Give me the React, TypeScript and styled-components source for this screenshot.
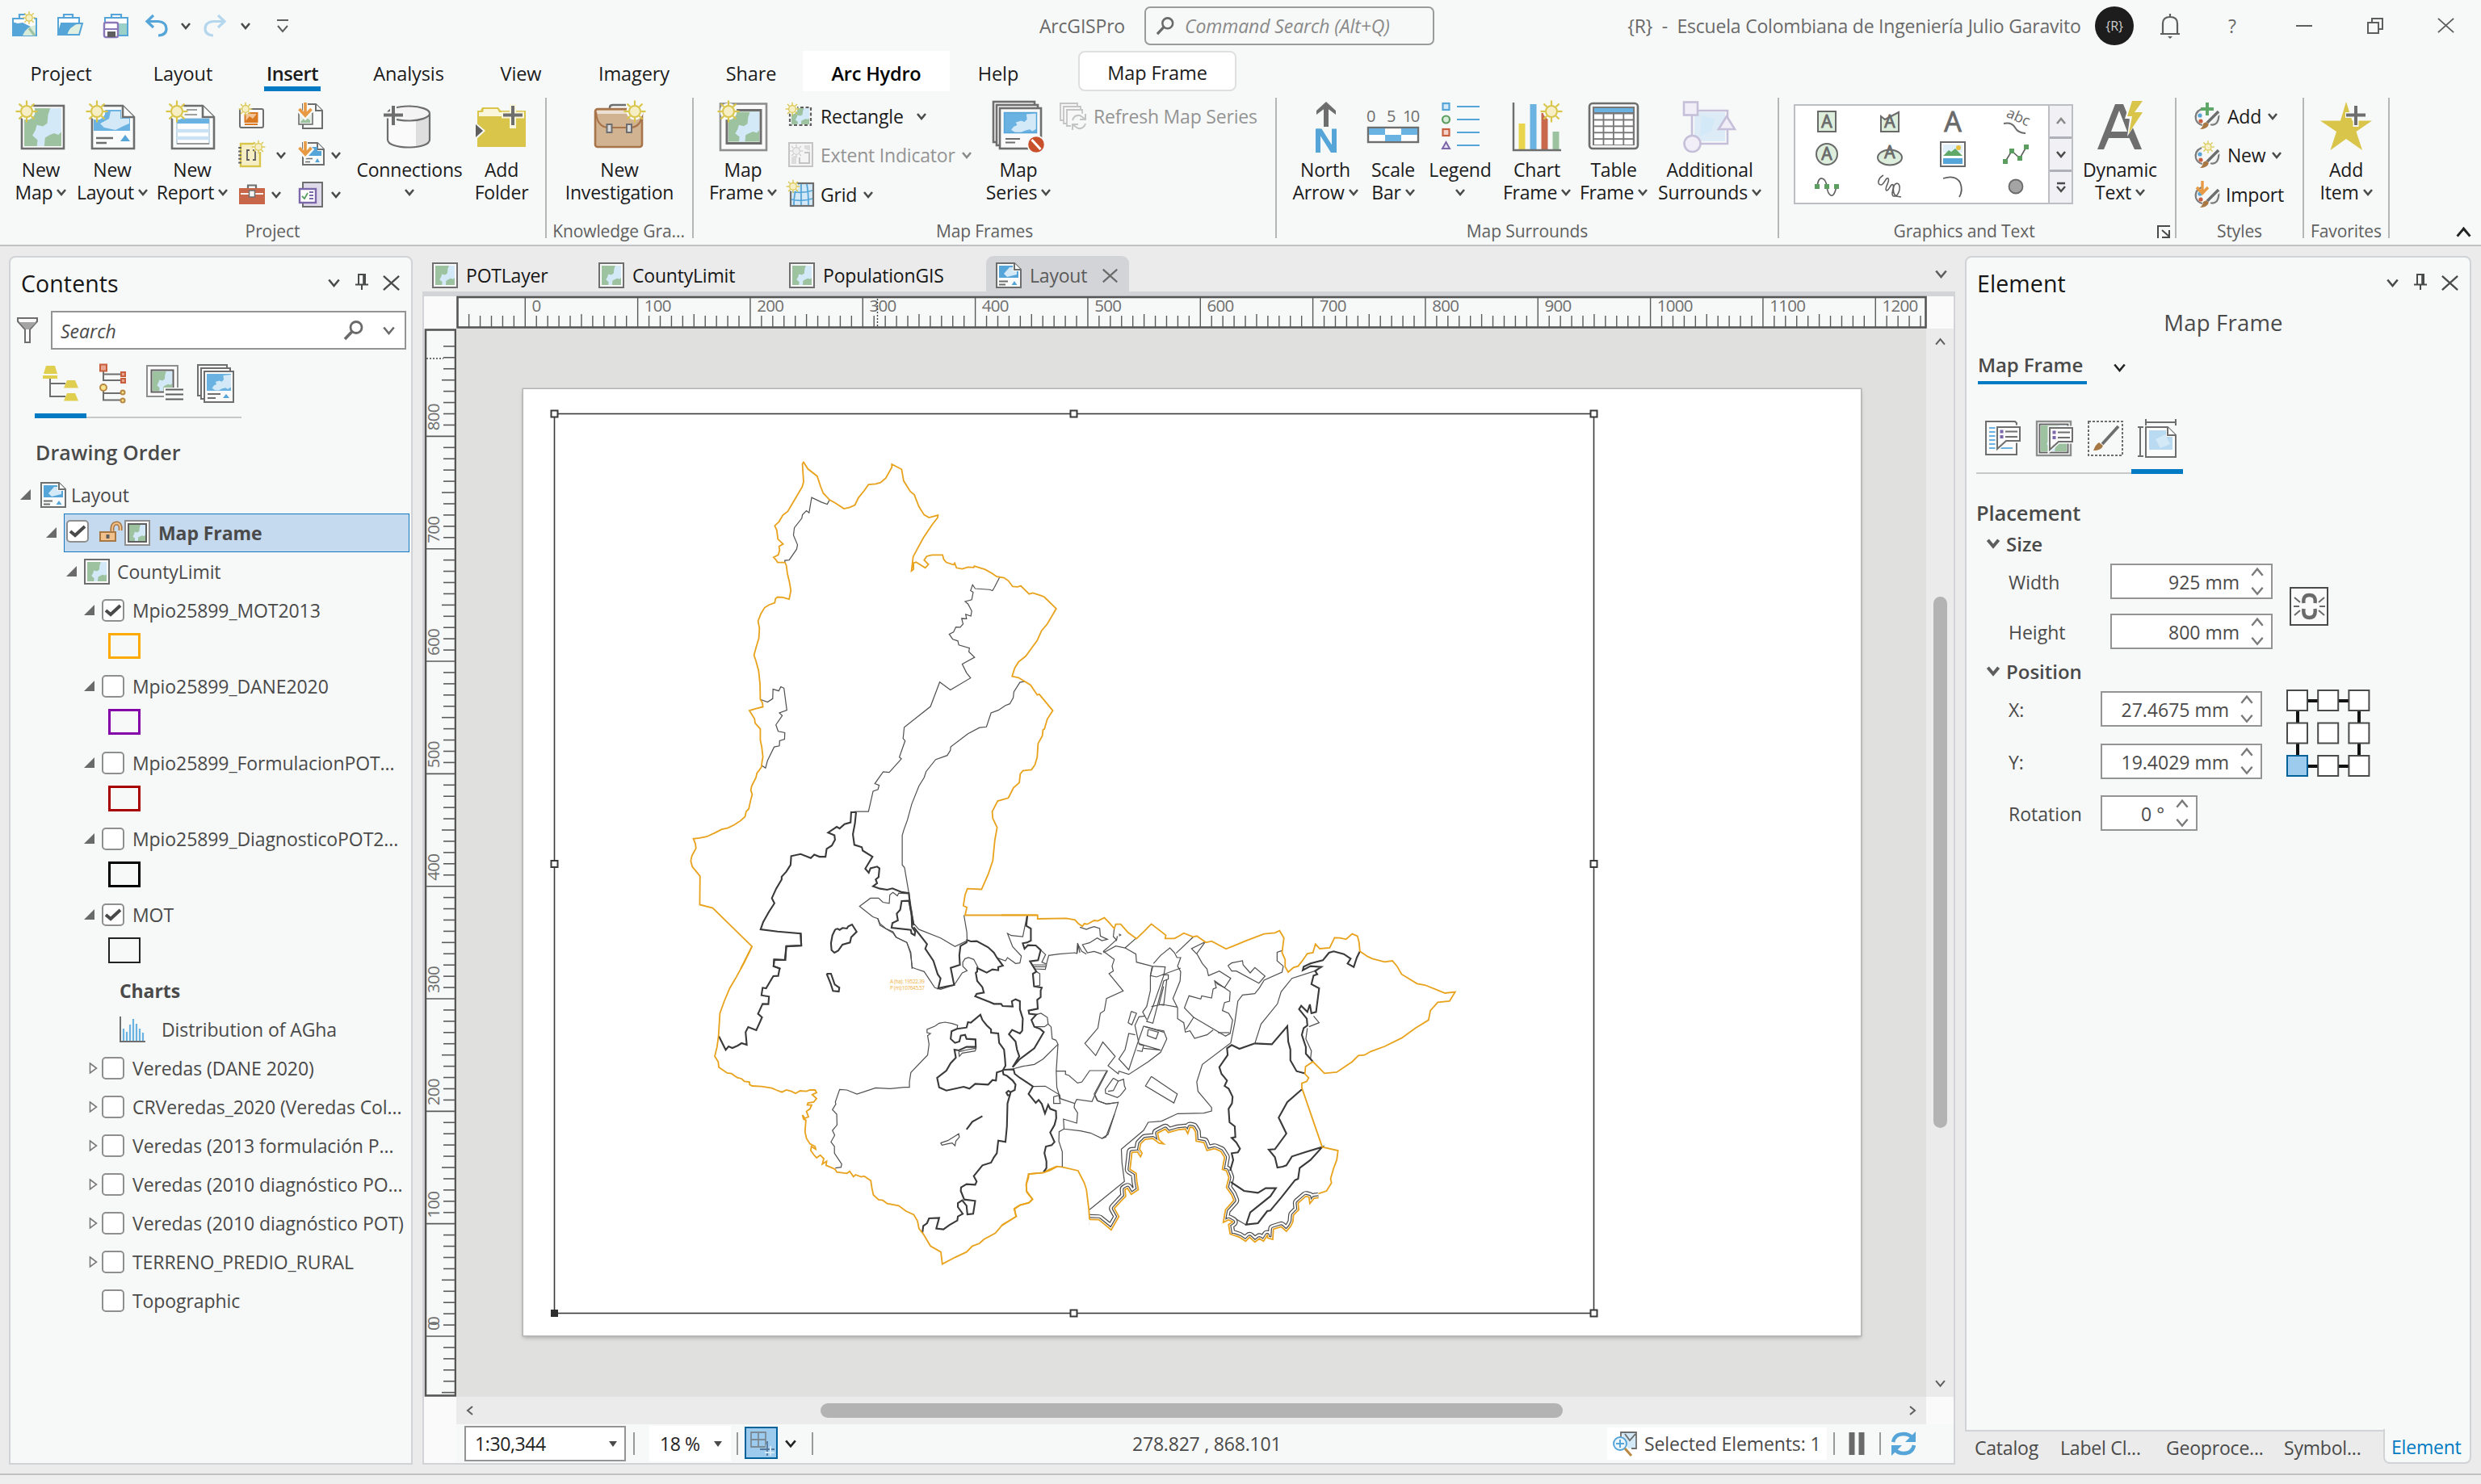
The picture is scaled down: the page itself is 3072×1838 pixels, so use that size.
import React from "react";
import styled, { createGlobalStyle, css } from "styled-components";

const font = `"Open Sans", "Noto Sans", sans-serif`;
const c = {
  bar: "#f7f9f8",
  shell: "#ebebeb",
  line: "#d2d3d7",
  ink: "#1b1b1b",
  text: "#4a4a4a",
  dim: "#6a6a6a",
  blue: "#007ac2",
  sky: "#56a5d8",
};

const Global = createGlobalStyle`
  * { box-sizing: border-box; }
  body { margin: 0; background: ${c.shell}; font-family: ${font}; font-size: 23px; color: ${c.text}; }
  svg { display: block; flex: none; overflow: visible; }
`;

/* ---------- glyph helpers ---------- */
type Dir = "down" | "up" | "left" | "right";
const chev: Record<Dir, string> = {
  down: "M1 2 L6 8 L11 2",
  up: "M1 8 L6 2 L11 8",
  left: "M9 0 L3 5 L9 10",
  right: "M3 0 L9 5 L3 10",
};
const Chevron = ({ dir = "down", w = 12, sw = 2.6, color = "#4a4a4a" }: { dir?: Dir; w?: number; sw?: number; color?: string }) => (
  <svg width={w} height={(w * 10) / 12} viewBox="0 0 12 10">
    <path d={chev[dir]} fill="none" stroke={color} strokeWidth={(sw * 12) / w} />
  </svg>
);

const Sun = ({ x, y, s = 1, mono }: { x: number; y: number; s?: number; mono?: boolean }) => {
  const rays = [0, 45, 90, 135, 180, 225, 270, 315];
  return (
    <g transform={`translate(${x} ${y}) scale(${s})`}>
      <circle r="10.5" fill={c.bar} />
      {rays.map((r) => (
        <path key={r} d="M0 -8 V-13.5" transform={`rotate(${r})`} stroke={mono ? "#cfcfcf" : "#d9c54a"} strokeWidth="2.2" />
      ))}
      <circle r="7" fill={mono ? "#eee" : "#f6efc6"} stroke={mono ? "#cfcfcf" : "#d9c54a"} strokeWidth="2" />
    </g>
  );
};

const MapArt = ({ x, y, w, h, blue }: { x: number; y: number; w: number; h: number; blue?: boolean }) => (
  <svg x={x} y={y} width={w} height={h} viewBox="0 0 100 100" preserveAspectRatio="none">
    <rect width="100" height="100" fill={blue ? "#69b2e2" : "#9dc29f"} />
    {blue ? (
      <path d="M68 10 L100 5 V78 L86 90 L78 82 L62 88 L50 98 L34 96 L22 84 L30 68 L40 62 L36 48 L52 40 L62 46 L70 34 Z" fill="#d3e9f8" />
    ) : (
      <path d="M70 0 H100 V62 L92 70 L80 66 L66 72 L56 78 L54 100 H34 L36 84 L22 72 L30 58 L34 44 L50 48 L62 40 L64 18 Z" fill="#d3e9f8" />
    )}
  </svg>
);

const PageShape = ({ x, y, w, h, f = 14, sw = 3 }: { x: number; y: number; w: number; h: number; f?: number; sw?: number }) => (
  <g fill={"#fafbfb"} stroke="#6e6e6e" strokeWidth={sw}>
    <path d={`M${x} ${y} H${x + w - f} L${x + w} ${y + f} V${y + h} H${x} Z`} />
    <path d={`M${x + w - f} ${y} V${y + f} H${x + w}`} />
  </g>
);

const Icon = ({ w = 64, h = 64, children }: { w?: number; h?: number; children: React.ReactNode }) => (
  <svg width={w} height={h} viewBox={`0 0 ${w} ${h}`} fill="none">
    {children}
  </svg>
);

/* ---------- large ribbon icons ---------- */
const NewMapIcon = () => (
  <Icon>
    <rect x="8" y="6" width="52" height="53" fill="#fff" stroke="#6e6e6e" strokeWidth="2.6" />
    <MapArt x={11} y={9} w={46} h={47} />
    <Sun x={14} y={13} />
  </Icon>
);
const NewLayoutIcon = () => (
  <Icon>
    <PageShape x={7} y={6} w={52} h={53} sw={2.6} />
    <path d="M9 11 H43 V21 H54 V37 H9 Z" fill="#69b2e2" />
    <path d="M30 13 H42 V22 H53 V28 L46 31 L36 36 L22 33 L17 28 L28 22 Z" fill="#d3e9f8" />
    <path d="M12 46 H33 M12 52 H25" stroke="#6e6e6e" strokeWidth="2.4" />
    <path d="M48 42 L54 50 H42 Z" fill={c.sky} />
    <Sun x={13} y={13} />
  </Icon>
);
const NewReportIcon = () => (
  <Icon>
    <PageShape x={7} y={6} w={52} h={53} sw={2.6} />
    <path d="M25 11 H38 M22 17 H38" stroke="#a0a0a0" strokeWidth="2.2" />
    <rect x="13" y="22" width="40" height="31" fill="#fff" stroke="#8fb4cc" strokeWidth="1" />
    <path d="M13 25 H53" stroke="#69b2e2" strokeWidth="6" />
    <path d="M13 37 H53 M13 46 H53" stroke="#c9e3f4" strokeWidth="4.5" />
    <path d="M13 53 H53" stroke="#9a9a9a" strokeWidth="2" />
    <Sun x={13} y={13} />
  </Icon>
);
const ConnectionsIcon = () => (
  <Icon>
    <path d="M5 16 V48 C5 54 17 57.500 31 57.500 S57 54 57 48 V16" fill="#fafafa" />
    <path d="M40 22 C49 22 57 18 57 16 V48 C57 52 49 56 40 57 Z" fill="#dedede" />
    <path d="M5 16 V48 C5 54 17 57.500 31 57.500 S57 54 57 48 V16" stroke="#6e6e6e" strokeWidth="2.2" />
    <ellipse cx="31" cy="15.500" rx="26" ry="9" fill="#f4f4f4" stroke="#6e6e6e" strokeWidth="2.2" />
    <path d="M12 4 V32 M-1 17.500 H26" stroke={c.bar} strokeWidth="8" />
    <path d="M12 6 V30 M0 17.500 H24" stroke="#6e6e6e" strokeWidth="4" />
  </Icon>
);
const FolderIcon = () => (
  <Icon>
    <path d="M2 57 V12 L6 12 L8 8 H28 L31 12 H62 V57 Z" fill="#d9c54a" />
    <path d="M4 19 V14 H9 L10 10 H27 L29 14 H60 V19 Z" fill="#faf6dc" />
    <path d="M-2 25 L12 37 L-2 50 Z" fill={c.bar} />
    <path d="M0 29 L9 37 L0 45 Z" fill="#5f5f5f" />
    <path d="M46 4 V34 M32 17.500 H60" stroke="#faf6dc" strokeWidth="8" />
    <path d="M46 6 V30 M34 17.500 H58" stroke="#6e6e6e" strokeWidth="4" />
  </Icon>
);
const BriefcaseIcon = () => (
  <Icon>
    <path d="M20 11 V8 Q20 5 24 5 H40" stroke="#6e6e6e" strokeWidth="2.400" />
    <rect x="2" y="10" width="58" height="47" rx="3" fill="#d2b391" stroke="#a8744a" strokeWidth="2.6" />
    <path d="M4 12 H58 V16 H4 Z" fill="#ece0d2" />
    <path d="M3 14 Q4 32 18 33 H46 Q58 32 60 18" stroke="#a8744a" strokeWidth="2.2" />
    <rect x="16.500" y="29" width="6" height="10" fill="#d8d8d8" stroke="#6e6e6e" strokeWidth="2" />
    <rect x="41" y="29" width="6" height="10" fill="#d8d8d8" stroke="#6e6e6e" strokeWidth="2" />
    <Sun x={51} y={13} />
  </Icon>
);
const MapFrameIcon = () => (
  <Icon>
    <rect x="4" y="3.500" width="57" height="57.500" fill="#fafafa" stroke="#8e8e8e" strokeWidth="2.6" />
    <rect x="12" y="11.500" width="42" height="41" fill="#fff" stroke="#6e6e6e" strokeWidth="3" />
    <MapArt x={14} y={13.5} w={38} h={37} />
    <Sun x={14} y={13} />
  </Icon>
);
const MapSeriesIcon = () => (
  <Icon w={66}>
    <g fill="#fafafa" stroke="#6e6e6e" strokeWidth="2.600">
      <rect x="2" y="1" width="51" height="50" />
      <rect x="6" y="5" width="51" height="50" />
      <rect x="10" y="9" width="51" height="50" />
    </g>
    <MapArt x={15} y={14} w={41} h={26} blue />
    <rect x="15.500" y="14.500" width="40" height="25" stroke={c.sky} strokeWidth="1.500" />
    <path d="M17 47 H35 M17 51.500 H29" stroke="#6e6e6e" strokeWidth="2.200" />
    <circle cx="55" cy="54" r="11.500" fill={c.bar} />
    <circle cx="55" cy="54" r="9.800" fill="#c8502b" />
    <path d="M49.500 48 L60.500 60" stroke="#fff" strokeWidth="3" />
  </Icon>
);
const SvgText = styled.text<{ $size: number; $color: string; $bold?: boolean }>`
  font-family: ${font};
  font-size: ${(p) => p.$size}px;
  font-weight: ${(p) => (p.$bold ? 700 : 400)};
  fill: ${(p) => p.$color};
`;
const NorthIcon = () => (
  <Icon>
    <path d="M33 32 V8" stroke="#6e6e6e" strokeWidth="6" />
    <path d="M21 17 V12 L33 1 L45 12 V17 L33 8 Z" fill="#6e6e6e" />
    <path d="M23 64 V34.500 M43 64 V34.500" stroke={c.sky} strokeWidth="6" />
    <path d="M20.500 34.500 H27.500 L46 64 H39 Z" fill={c.sky} />
  </Icon>
);
const ScaleIcon = () => (
  <Icon w={66}>
    <SvgText $size={20} $color="#6e6e6e" x="0" y="26">0</SvgText>
    <SvgText $size={20} $color="#6e6e6e" x="25" y="26">5</SvgText>
    <SvgText $size={20} $color="#6e6e6e" x="45" y="26" textLength="21">10</SvgText>
    <rect x="2" y="33" width="62" height="18" fill="#fff" stroke="#6e6e6e" strokeWidth="2.400" />
    <path d="M3 34 H23 V42 H3 Z M43 34 H63 V42 H43 Z M23 42 H43 V50 H23 Z" fill="#69b2e2" />
  </Icon>
);
const LegendIcon = () => (
  <Icon w={50}>
    <path d="M21 7 H49 M21 23 H49 M21 39 H49 M21 55 H49" stroke={c.sky} strokeWidth="2.200" />
    <rect x="3.500" y="3" width="8" height="8" fill="#d3e9f8" stroke={c.sky} strokeWidth="2.200" />
    <circle cx="7.500" cy="23" r="4.500" fill="#d9ecd9" stroke="#5b9e5f" strokeWidth="2.200" />
    <rect x="3.500" y="35" width="8" height="8" fill="#f3d5cc" stroke="#c8603f" strokeWidth="2.200" />
    <path d="M7.500 51 L12 59 H3 Z" fill="#e6e0ef" stroke="#7c67ab" strokeWidth="2" />
  </Icon>
);
const ChartIcon = () => (
  <Icon>
    <path d="M9.500 28 H17.500 V60 H9.500 Z" fill="#e8d44d" />
    <path d="M23.500 4 H31.500 V60 H23.500 Z" fill="#69b2e2" />
    <path d="M37.500 15 H45.500 V60 H37.500 Z" fill="#c9694c" />
    <path d="M51.500 38 H59.500 V60 H51.500 Z" fill="#9dc29f" />
    <path d="M3 2 V61 H62" stroke="#6e6e6e" strokeWidth="2.400" />
    <Sun x={50} y={13} />
  </Icon>
);
const TableIcon = () => (
  <Icon>
    <rect x="2" y="3" width="60" height="56" rx="4" fill="#f4f4f4" stroke="#6e6e6e" strokeWidth="2.600" />
    <rect x="6" y="7" width="52" height="48" fill="#777" />
    <rect x="8" y="9" width="48" height="5" fill="#69b2e2" />
    {[0, 1, 2, 3, 4].map((r) =>
      [0, 1, 2, 3].map((k) => <rect key={`${r}${k}`} x={8 + k * 12.4} y={16.5 + r * 7.9} width="10.600" height="6" fill="#fff" />)
    )}
  </Icon>
);
const SurroundsIcon = () => (
  <Icon>
    <path d="M10 16 V44 M18 12 H54 V53 H20" stroke="#c6bfd9" strokeWidth="2.600" />
    <rect x="13" y="14" width="38" height="36" fill="#dcebf5" />
    <path d="M22 18 L38 22 L34 38 L20 44 Z" fill="#d3e9f8" />
    <rect x="0" y="1.500" width="17" height="16" fill="#f1eef7" stroke="#c6bfd9" strokeWidth="2.600" />
    <circle cx="10.500" cy="53" r="10" fill="#f1eef7" stroke="#c6bfd9" strokeWidth="2.600" />
    <path d="M53 19 L63 35 H43 Z" fill="#f1eef7" stroke="#c6bfd9" strokeWidth="2.600" />
  </Icon>
);
const DynamicIcon = () => (
  <Icon>
    <path d="M4 60 L26 4 H36 L59 60 H50 L43.500 46 H18 L12 60 Z M21 38 H41 L31 12 Z" fill="#6e6e6e" fillRule="evenodd" />
    <path d="M45 -2 L38 22 H44 L41 44 L62 12 H54 L61 -2 Z" fill={c.bar} />
    <path d="M47 0 L41 19 H47 L43 40 L60 14 H50 L60 0 Z" fill="#d9c54a" />
  </Icon>
);
const StarIcon = () => (
  <Icon>
    <path d="M32 1 L39.500 24.500 H64 L44.500 38 L52 61 L32 47 L12.500 61 L20 38 L0 24.500 H25 Z" fill="#d9c54a" />
    <path d="M44 4 V32 M31 17.500 H58" stroke={c.bar} strokeWidth="7" />
    <path d="M44 6 V30 M32 17.500 H56" stroke="#6e6e6e" strokeWidth="4" />
  </Icon>
);

/* ---------- 32 px icons ---------- */
const MapIcon32 = ({ frame }: { frame?: boolean }) => (
  <Icon w={32} h={32}>
    <rect x="1" y="1" width="30" height="30" fill="#fafafa" stroke={frame ? "#8e8e8e" : "#6e6e6e"} strokeWidth="2" />
    {frame && <rect x="5" y="5" width="22" height="22" stroke="#5e5e5e" strokeWidth="2" />}
    <MapArt x={frame ? 6 : 4} y={frame ? 6 : 4} w={frame ? 20 : 24} h={frame ? 20 : 24} />
  </Icon>
);
const LayoutIcon32 = () => (
  <Icon w={32} h={32}>
    <PageShape x={1} y={1} w={30} h={30} f={8} sw={2} />
    <path d="M4 4 H21 V11 H28 V19 H4 Z" fill={c.sky} />
    <path d="M17 6 H21 V11 H26 V15 L14 18 L10 14 Z" fill="#d3e9f8" />
    <path d="M4 23.500 H15 M4 27.500 H12" stroke="#6e6e6e" strokeWidth="1.800" />
    <path d="M23 23 L26.500 28 H19.500 Z" fill={c.sky} />
  </Icon>
);
const TemplateIcon = () => (
  <Icon w={34} h={34}>
    <rect x="2" y="8" width="29" height="23" rx="2" fill="#fafafa" stroke="#6e6e6e" strokeWidth="2" />
    <rect x="8.500" y="13" width="15" height="11" fill="#f2c49a" stroke="#d97a22" strokeWidth="2" />
    <path d="M9 23 L14 17 L18 20 L23 14 V23 Z" fill="#d97a22" />
    <path d="M8 27 H24" stroke="#d97a22" strokeWidth="2" />
    <Sun x={9} y={8} s={0.62} />
  </Icon>
);
const ImportMapIcon = ({ layout }: { layout?: boolean }) => (
  <Icon w={34} h={34}>
    <PageShape x={6} y={2} w={layout ? 26 : 24} h={layout ? 27 : 30} f={8} sw={2} />
    {layout ? (
      <>
        <path d="M14 7 H24 V12 H29 V18 H10 Z" fill={c.sky} />
        <path d="M9 21.500 H18 M9 25.500 H15" stroke="#6e6e6e" strokeWidth="1.600" />
        <path d="M24 21 L27 26 H21 Z" fill={c.sky} />
      </>
    ) : (
      <rect x="1" y="13" width="17" height="14" fill="#e6efe6" stroke="#6e6e6e" strokeWidth="1.600" />
    )}
    {!layout && <path d="M3 24 L9 18 L15 22 V25 H3 Z" fill="#9dc29f" />}
    <path d="M9 0 V17 M0 8 L9 18 L18 8" stroke={c.bar} strokeWidth="6" />
    <path d="M9 0 V15 M1.500 8 L9 16 L16.500 8" stroke="#e79a43" strokeWidth="3.600" />
  </Icon>
);
const NotebookIcon = () => (
  <Icon w={34} h={34}>
    <rect x="3" y="3" width="24" height="28" fill="#f6efc6" stroke="#d9c54a" strokeWidth="2.400" />
    <path d="M2 7 V29" stroke="#5e5e5e" strokeWidth="3.600" strokeDasharray="2 2.600" />
    <path d="M14 11 H11 V23 H14 M18 11 H21 V23 H18" stroke="#5e5e5e" strokeWidth="1.800" />
    <Sun x={25} y={7} s={0.62} />
  </Icon>
);
const ToolboxIcon = () => (
  <Icon w={34} h={26}>
    <path d="M12 5 V1.500 H22 V5" stroke="#6e6e6e" strokeWidth="2.200" />
    <rect x="1" y="5" width="32" height="20" fill="#c8664a" />
    <path d="M3 12 H31" stroke="#fff" strokeWidth="1.800" />
    <rect x="13.500" y="8" width="7" height="8" fill="#f5f5f5" stroke="#6e6e6e" strokeWidth="1.500" />
  </Icon>
);
const TaskIcon = () => (
  <Icon w={34} h={34}>
    <rect x="6" y="2" width="24" height="30" fill="#dedaea" stroke="#6e6e6e" strokeWidth="2" />
    <rect x="2" y="10" width="20" height="17" fill="#fff" stroke="#7c67ab" strokeWidth="2.400" />
    <path d="M5 19 L8 22 L12 15" stroke="#5b9e5f" strokeWidth="1.800" />
    <path d="M14 14 H19 M14 18 H19 M14 22 H19" stroke="#7c67ab" strokeWidth="1.800" />
  </Icon>
);
const RectangleIcon = () => (
  <Icon w={34} h={34}>
    <MapArt x={6} y={7} w={22} h={20} />
    <rect x="4" y="6" width="26" height="22" stroke="#5e5e5e" strokeWidth="2.200" strokeDasharray="4 2.500" />
    <Sun x={7} y={8} s={0.62} />
  </Icon>
);
const ExtentIcon = () => (
  <Icon w={34} h={34}>
    <rect x="3" y="2" width="29" height="29" fill="#f4f4f4" stroke="#c4c4c4" strokeWidth="2" />
    <path d="M6 20 L12 16 V28 H6 Z M22 5 H29 V12 L22 9 Z" fill="#dcdcdc" />
    <path d="M16 20 V27 H28 V14 H22" stroke="#c4c4c4" strokeWidth="2" />
    <Sun x={12} y={12} s={0.62} mono />
  </Icon>
);
const GridIcon = () => (
  <Icon w={34} h={34}>
    <rect x="5" y="3" width="28" height="28" fill="#d3e9f8" stroke="#6e6e6e" strokeWidth="2.200" />
    <path d="M9 30 Q9 14 14 4 M18 30 V4 M27 30 Q27 14 25 4 M6 13 Q18 16 32 12 M6 23 Q18 26 32 22" stroke={c.sky} strokeWidth="1.800" />
    <Sun x={8} y={7} s={0.62} />
  </Icon>
);
const RefreshSeriesIcon = () => (
  <Icon w={34} h={34}>
    <g fill="#f7f7f7" stroke="#c4c4c4" strokeWidth="1.800">
      <path d="M22 6 V1 H1 V22 H6" />
      <path d="M26 10 V5 H5 V26 H10" />
      <path d="M28 14 V9 H9 V29 H14" />
    </g>
    <circle cx="24" cy="24" r="11" fill={c.bar} />
    <path d="M16 22 Q18 15 25 16 L31 20 M32 14 V21 H25 M32 26 Q30 33 23 32 L17 28 M16 34 V27 H23" stroke="#c4c4c4" strokeWidth="2" />
  </Icon>
);
const Palette = ({ kind }: { kind: "add" | "new" | "import" }) => (
  <Icon w={34} h={34}>
    <path d="M10 8 Q1 12 3 21 Q5 27 11 28 M30 12 Q33 18 29 25 Q25 29 21 27" stroke="#7a7a7a" strokeWidth="2.200" fill="#f0f0f0" />
    <circle cx="8" cy="16" r="2.600" fill={c.sky} />
    <circle cx="9" cy="23" r="2.600" fill="#c8603f" />
    <path d="M30 12 L16 27" stroke={c.bar} strokeWidth="7" />
    <path d="M31 11 L17 25" stroke="#6e6e6e" strokeWidth="3.600" />
    <path d="M16 24 L19 27 Q17 33 8 33 Q12 30 12 26 Z" fill="#a87844" />
    {kind === "add" && <path d="M17 0 V16 M9 8 H25" stroke="#5fa868" strokeWidth="4" />}
    {kind === "new" && <Sun x={18} y={7} s={0.58} />}
    {kind === "import" && <path d="M11 0 V15 M4 8 L11 15.500 L18 8" stroke="#e79a43" strokeWidth="3.400" />}
  </Icon>
);
const SearchGlyph = ({ size = 24 }: { size?: number }) => (
  <svg width={size} height={size} viewBox="0 0 24 24" fill="none">
    <circle cx="15" cy="8.500" r="7" stroke="#6a6a6a" strokeWidth="2.800" />
    <path d="M10 13.500 L1 23" stroke="#6a6a6a" strokeWidth="3.600" />
  </svg>
);
const Pin = () => (
  <svg width="24" height="24" viewBox="0 0 24 24" fill="none" stroke="#4a4a4a" strokeWidth="2">
    <path d="M7 14 V2 H15 V14 M3 14.500 H19 M11 15 V21" />
    <path d="M13.500 3 V14" strokeWidth="2.600" />
  </svg>
);
const Cross = ({ size = 24, color = "#4a4a4a", sw = 2.4 }: { size?: number; color?: string; sw?: number }) => (
  <svg width={size} height={size} viewBox="0 0 24 24" fill="none" stroke={color} strokeWidth={sw}>
    <path d="M2 3 L22 21 M22 3 L2 21" />
  </svg>
);

/* ---------- title bar ---------- */
const TitleBar = styled.header`
  display: flex;
  align-items: center;
  height: 63px;
  padding: 0 32px 0 14px;
`;
const TitleText = styled.span<{ $ml?: number; $w?: number }>`
  color: #6a6a6a;
  margin-left: ${(p) => p.$ml || 0}px;
  ${(p) => p.$w && css`width: ${p.$w}px;`}
  letter-spacing: -0.2px;
  white-space: pre;
`;
const QuickItem = styled.span<{ $ml: number }>`
  margin-left: ${(p) => p.$ml}px;
  display: flex;
`;
const CommandSearch = styled.div`
  display: flex;
  align-items: center;
  gap: 13px;
  width: 360px;
  height: 48px;
  margin-left: 26px;
  padding-left: 13px;
  border: 2px solid #9a9c9b;
  border-radius: 7px;
  font-style: italic;
  color: #8a8a8a;
  letter-spacing: -0.1px;
`;
const Avatar = styled.span`
  display: flex;
  align-items: center;
  justify-content: center;
  width: 48px;
  height: 48px;
  margin-left: 17px;
  border-radius: 50%;
  background: #1d1d1d;
  color: #cfcfcf;
  font-size: 16px;
`;

const Title = () => (
  <TitleBar>
    <Icon w={32} h={32}>
      <path d="M2 7 H31 V28 H2 Z" fill="#fff" stroke={c.sky} strokeWidth="2" />
      <path d="M10 6 V2 H18" stroke={c.sky} strokeWidth="2.200" />
      <path d="M1 11 L8 13 L14 12 L30 20 V28 H1 Z" fill={c.sky} />
      <path d="M14 28 Q18 17 30 15 V28 Z" fill="#d9ecd9" />
      <path d="M22 19 L29 28" stroke="#9dc29f" strokeWidth="3" />
      <Sun x={22} y={6} s={0.6} />
    </Icon>
    <QuickItem $ml={24}>
      <Icon w={33} h={32}>
        <path d="M2 27 V6 H28 V27" fill="#fff" stroke={c.sky} strokeWidth="2" />
        <path d="M9 6 V2 H20 V6" stroke={c.sky} strokeWidth="2.200" />
        <path d="M6 13 L32 13 L28 27 H2 Z" fill="#dff0e2" stroke={c.sky} strokeWidth="2" />
        <path d="M6 13 H27 Q16 17 13 27 H2 Z" fill={c.sky} />
      </Icon>
    </QuickItem>
    <QuickItem $ml={24}>
      <Icon w={34} h={34}>
        <path d="M3 20 V7 H31 V29 H18" fill="#fff" stroke={c.sky} strokeWidth="2" />
        <path d="M11 7 V3 H23 V7" stroke={c.sky} strokeWidth="2.200" />
        <path d="M20 14 H30 V28 H20 Z" fill="#9ad0c8" />
        <rect x="2" y="13" width="17" height="18" rx="2" fill="#fff" stroke="#8b78b8" strokeWidth="2.400" />
        <path d="M2 21 H19" stroke="#8b78b8" strokeWidth="2" />
        <rect x="6" y="24" width="10" height="7" fill="#5e5e5e" />
      </Icon>
    </QuickItem>
    <QuickItem $ml={19}>
      <Icon w={28} h={28}>
        <path d="M10 1 L2 8.500 L10 16 M2 8.500 H16 Q26 9.500 26 17.500 Q26 25.500 16 26" stroke={c.sky} strokeWidth="3.200" />
      </Icon>
    </QuickItem>
    <QuickItem $ml={16}><Chevron /></QuickItem>
    <QuickItem $ml={16}>
      <Icon w={28} h={28}>
        <path d="M18 1 L26 8.500 L18 16 M26 8.500 H12 Q2 9.500 2 17.500 Q2 25.500 12 26" stroke="#b5d7ee" strokeWidth="3.200" />
      </Icon>
    </QuickItem>
    <QuickItem $ml={18}><Chevron /></QuickItem>
    <QuickItem $ml={32}>
      <Icon w={16} h={18}>
        <path d="M1 2 H15 M2 9 L8 16 L14 9" stroke="#5e5e5e" strokeWidth="2" />
      </Icon>
    </QuickItem>
    <TitleText $ml={929} $w={104}>ArcGISPro</TitleText>
    <CommandSearch>
      <SearchGlyph size={22} />
      Command Search (Alt+Q)
    </CommandSearch>
    <TitleText $ml={239} $w={563}>{"{R}  -  Escuela Colombiana de Ingeniería Julio Garavito"}</TitleText>
    <Avatar>{"{R}"}</Avatar>
    <QuickItem $ml={31}>
      <Icon w={28} h={32}>
        <path d="M2 26 H26 M5 25 V13 Q5 5 14 5 T23 13 V25 M14 1 V5" stroke="#5e5e5e" strokeWidth="2.200" />
        <path d="M11 29 H17 L14 32 Z" fill="#5e5e5e" />
      </Icon>
    </QuickItem>
    <TitleText $ml={58} $w={16}>?</TitleText>
    <QuickItem $ml={68}>
      <Icon w={20} h={20}><path d="M0 10 H20" stroke="#5e5e5e" strokeWidth="2" /></Icon>
    </QuickItem>
    <QuickItem $ml={67}>
      <Icon w={22} h={22}><path d="M2 7 H15 V20 H2 Z M7 6 V2 H20 V15 H16" stroke="#5e5e5e" strokeWidth="2" /></Icon>
    </QuickItem>
    <QuickItem $ml={65}><Cross size={23} color="#5e5e5e" sw={2} /></QuickItem>
  </TitleBar>
);

/* ---------- menu tabs ---------- */
const MenuBar = styled.nav`
  display: flex;
  height: 50px;
`;
const MenuTab = styled.div<{ $w: number; $ml?: number; $kind?: "active" | "addin" | "context" }>`
  display: flex;
  justify-content: center;
  align-items: center;
  width: ${(p) => p.$w}px;
  margin-left: ${(p) => p.$ml || 0}px;
  padding-top: 5px;
  color: ${c.ink};
  font-size: 23.5px;
  letter-spacing: -0.1px;
  ${(p) => p.$kind === "active" && css`font-weight: 600; letter-spacing: -0.4px; padding-top: 4px;`}
  ${(p) => p.$kind === "addin" && css`font-weight: 600; background: #fff; color: #000; letter-spacing: -0.2px;`}
  ${(p) => p.$kind === "context" && css`background: #fff; border: 2px solid #dfdfdf; border-radius: 8px; padding-top: 4px;`}
`;
const ActiveLabel = styled.span`
  display: flex;
  align-items: center;
  justify-content: center;
  width: 70px;
  height: 46px;
  border-bottom: 6px solid ${c.blue};
  padding-top: 7px;
`;

/* ---------- ribbon ---------- */
const RibbonBar = styled.div`
  display: flex;
  height: 192px;
  border-bottom: 2px solid #c2c2c6;
  background: ${c.bar};
`;
const Divider = styled.i`
  width: 2px;
  margin: 8px 0;
  background: #b6b6b6;
`;
const Group = styled.section<{ $w: number }>`
  display: flex;
  flex-direction: column;
  width: ${(p) => p.$w}px;
  padding-top: 6px;
`;
const GroupBody = styled.div`
  display: flex;
  height: 153px;
`;
const GroupLabel = styled.div<{ $shift?: number }>`
  display: flex;
  justify-content: center;
  align-items: center;
  height: 28px;
  margin-right: ${(p) => p.$shift || 0}px;
  font-size: 21px;
  letter-spacing: -0.1px;
  color: #5f5f5f;
  white-space: nowrap;
`;
const Big = styled.div<{ $w: number; $ml?: number }>`
  display: flex;
  flex-direction: column;
  align-items: center;
  width: ${(p) => p.$w}px;
  margin-left: ${(p) => p.$ml || 0}px;
  padding-top: 6px;
  color: ${c.ink};
  letter-spacing: -0.2px;
`;
const BigLine = styled.span<{ $first?: boolean }>`
  display: flex;
  align-items: center;
  gap: 5px;
  height: 28px;
  line-height: 28px;
  margin-top: ${(p) => (p.$first ? 7 : 0)}px;
  white-space: nowrap;
`;
const BigButton = ({ icon, a, b, drop, w, ml }: { icon: React.ReactNode; a: string; b?: string; drop?: boolean; w: number; ml?: number }) => (
  <Big $w={w} $ml={ml}>
    {icon}
    <BigLine $first>{a}</BigLine>
    <BigLine>
      {b}
      {drop && <Chevron />}
    </BigLine>
  </Big>
);
const SmallColumn = styled.div<{ $w?: number; $ml?: number }>`
  display: flex;
  flex-direction: column;
  width: ${(p) => (p.$w ? `${p.$w}px` : "auto")};
  margin-left: ${(p) => p.$ml || 0}px;
  padding-top: 1px;
`;
const Small = styled.div<{ $off?: boolean; $gap?: number }>`
  display: flex;
  align-items: center;
  gap: ${(p) => p.$gap ?? 8}px;
  height: 48.3px;
  color: ${(p) => (p.$off ? "#949494" : c.ink)};
  letter-spacing: -0.2px;
  white-space: nowrap;
`;

const Gallery = styled.div`
  display: flex;
  width: 346px;
  height: 124px;
  margin: 10px 0 0 18px;
  border: 2px solid #bdbec3;
  background: #fff;
`;
const GalleryGrid = styled.div`
  display: grid;
  flex: 1;
  grid-template-columns: repeat(4, 78px);
  grid-template-rows: repeat(3, 40px);
  justify-items: center;
  align-items: center;
`;
const GalleryScroll = styled.div`
  display: grid;
  width: 29px;
  grid-template-rows: 1fr 1fr 1fr;
  gap: 3px;
  border-left: 2px solid #bdbec3;
  background: #b0b1b8;
`;
const ScrollCell = styled.div`
  display: flex;
  flex-direction: column;
  align-items: center;
  justify-content: center;
  background: #f0f0f5;
`;
const LetterA = ({ x = 15, y = 22, s = 21 }: { x?: number; y?: number; s?: number }) => (
  <SvgText $size={s} $color="#6a6a6a" x={x} y={y} textAnchor="middle" stroke="#6a6a6a" strokeWidth="0.9">A</SvgText>
);

const Launcher = styled.span`
  display: flex;
  width: 0;
  margin: 6px -118px 0 118px;
`;
const LabelRow = styled.div`
  display: flex;
  justify-content: center;
`;
const CollapseSlot = styled.div`
  display: flex;
  flex: 1;
  justify-content: flex-end;
  align-items: flex-end;
  padding: 0 12px 7px 0;
`;

const Ribbon = () => (
  <RibbonBar>
    <Group $w={675}>
      <GroupBody>
        <BigButton icon={<NewMapIcon />} a="New" b="Map" drop w={85} ml={8} />
        <BigButton icon={<NewLayoutIcon />} a="New" b="Layout" drop w={92} />
        <BigButton icon={<NewReportIcon />} a="New" b="Report" drop w={94} ml={6} />
        <SmallColumn $w={62} $ml={10}>
          <Small><TemplateIcon /></Small>
          <Small $gap={13}><NotebookIcon /><Chevron /></Small>
          <Small $gap={7}><ToolboxIcon /><Chevron /></Small>
        </SmallColumn>
        <SmallColumn $w={60} $ml={12}>
          <Small><ImportMapIcon /></Small>
          <Small $gap={7}><ImportMapIcon layout /><Chevron /></Small>
          <Small $gap={7}><TaskIcon /><Chevron /></Small>
        </SmallColumn>
        <BigButton icon={<ConnectionsIcon />} a="Connections" drop w={134} ml={11} />
        <BigButton icon={<FolderIcon />} a="Add" b="Folder" w={72} ml={11} />
      </GroupBody>
      <GroupLabel>Project</GroupLabel>
    </Group>
    <Divider />
    <Group $w={180}>
      <GroupBody>
        <BigButton icon={<BriefcaseIcon />} a="New" b="Investigation" w={140} ml={20} />
      </GroupBody>
      <GroupLabel $shift={2}>Knowledge Gra...</GroupLabel>
    </Group>
    <Divider />
    <Group $w={720}>
      <GroupBody>
        <BigButton icon={<MapFrameIcon />} a="Map" b="Frame" drop w={84} ml={19} />
        <SmallColumn $w={235} $ml={12}>
          <Small><RectangleIcon /><span>Rectangle</span><i /><Chevron /></Small>
          <Small $off><ExtentIcon /><span>Extent Indicator</span><Chevron color="#8a8a8a" /></Small>
          <Small><GridIcon /><span>Grid</span><Chevron /></Small>
        </SmallColumn>
        <BigButton icon={<MapSeriesIcon />} a="Map" b="Series" drop w={84} ml={10} />
        <SmallColumn $ml={9}>
          <Small $off><RefreshSeriesIcon />Refresh Map Series</Small>
        </SmallColumn>
      </GroupBody>
      <GroupLabel>Map Frames</GroupLabel>
    </Group>
    <Divider />
    <Group $w={620}>
      <GroupBody>
        <BigButton icon={<NorthIcon />} a="North" b="Arrow" drop w={80} ml={20} />
        <BigButton icon={<ScaleIcon />} a="Scale" b="Bar" drop w={68} ml={10} />
        <BigButton icon={<LegendIcon />} a="Legend" drop w={80} ml={9} />
        <BigButton icon={<ChartIcon />} a="Chart" b="Frame" drop w={84} ml={13} />
        <BigButton icon={<TableIcon />} a="Table" b="Frame" drop w={84} ml={11} />
        <BigButton icon={<SurroundsIcon />} a="Additional" b="Surrounds" drop w={130} ml={12} />
      </GroupBody>
      <GroupLabel>Map Surrounds</GroupLabel>
    </Group>
    <Divider />
    <Group $w={490}>
      <GroupBody>
        <Gallery>
          <GalleryGrid>
            <Icon w={30} h={30}><rect x="4" y="2" width="22" height="25" fill="#ddeedd" stroke="#6a6a6a" strokeWidth="2" /><LetterA /></Icon>
            <Icon w={30} h={30}><path d="M4 27 V8 L9 12 L26 3 V27 Z" fill="#ddeedd" stroke="#6a6a6a" strokeWidth="2" /><LetterA /></Icon>
            <Icon w={30} h={30}><LetterA y={27} s={34} /></Icon>
            <Icon w={30} h={30}>
              <g transform="rotate(24 6 10)"><SvgText $size={18} $color="#6a6a6a" x="2" y="10">abc</SvgText></g>
              <path d="M0 17 Q10 15 14 22 T27 29" stroke="#6a6a6a" strokeWidth="2" />
            </Icon>
            <Icon w={30} h={30}><circle cx="15" cy="15" r="13" fill="#ddeedd" stroke="#6a6a6a" strokeWidth="2" /><LetterA /></Icon>
            <Icon w={32} h={30}><ellipse cx="16" cy="19" rx="15" ry="9.500" fill="#ddeedd" stroke="#6a6a6a" strokeWidth="2" /><LetterA x={16} y={20} /></Icon>
            <Icon w={32} h={32}>
              <rect x="1" y="1" width="30" height="30" fill="#fff" stroke="#6a6a6a" strokeWidth="2" />
              <rect x="4" y="4" width="24" height="10" fill="#dff0fa" /><circle cx="23" cy="8" r="3" fill="#e8c03c" />
              <path d="M4 18 L11 11 L14 13 L19 9 L28 18 Z" fill="#5fa868" /><rect x="4" y="21" width="24" height="7" fill={c.sky} />
            </Icon>
            <Icon w={32} h={26}>
              <path d="M3 22 L11 9 L21 18 L29 4" stroke="#5e5e5e" strokeWidth="1.600" />
              <path d="M0 19 h6 v6 h-6z M8 6 h6 v6 h-6z M18 15 h6 v6 h-6z M26 1 h6 v6 h-6z" fill="#5b9e5f" />
            </Icon>
            <Icon w={32} h={26}>
              <path d="M4 14 Q5 2 10 3 T16 13 T21 24 T28 13" stroke="#5e5e5e" strokeWidth="1.600" />
              <path d="M1 10 h6 v6 h-6z M13 10 h6 v6 h-6z M25 10 h6 v6 h-6z" fill="#5b9e5f" />
            </Icon>
            <Icon w={30} h={30}><path d="M7 1 C0 5 -1 13 4 13 C8 13 10 3 13 5 C16 8 7 18 11 20 C14 20 17 10 19 13 C21 16 15 26 20 27 C27 27 30 12 24 11 C18 12 18 24 23 27 L29 28" stroke="#5e5e5e" strokeWidth="1.600" /></Icon>
            <Icon w={30} h={30}><path d="M3 5 Q18 0 24 10 Q28 20 23 28" stroke="#5e5e5e" strokeWidth="1.800" /></Icon>
            <Icon w={20} h={20}><circle cx="10" cy="10" r="8.500" fill="#a4a4a4" stroke="#6a6a6a" strokeWidth="1.800" /></Icon>
          </GalleryGrid>
          <GalleryScroll>
            <ScrollCell><Chevron dir="up" color="#8a8a8a" /></ScrollCell>
            <ScrollCell><Chevron /></ScrollCell>
            <ScrollCell><Icon w={12} h={14}><path d="M1 2 H11 M1 6 L6 12 L11 6" stroke="#4a4a4a" strokeWidth="2.400" /></Icon></ScrollCell>
          </GalleryScroll>
        </Gallery>
        <BigButton icon={<DynamicIcon />} a="Dynamic" b="Text" drop w={96} ml={10} />
      </GroupBody>
      <LabelRow>
        <GroupLabel $shift={32}>Graphics and Text</GroupLabel>
        <Launcher>
          <Icon w={18} h={18}><path d="M2 17 V2 H17 M7 7 L16 15 M16 7 V16 H7" stroke="#4a4a4a" strokeWidth="2" /></Icon>
        </Launcher>
      </LabelRow>
    </Group>
    <Divider />
    <Group $w={156}>
      <GroupBody>
        <SmallColumn $ml={21}>
          <Small><Palette kind="add" />Add<Chevron /></Small>
          <Small><Palette kind="new" />New<Chevron /></Small>
          <Small $gap={6}><Palette kind="import" />Import</Small>
        </SmallColumn>
      </GroupBody>
      <GroupLabel>Styles</GroupLabel>
    </Group>
    <Divider />
    <Group $w={104}>
      <GroupBody>
        <BigButton icon={<StarIcon />} a="Add" b="Item" drop w={72} ml={16} />
      </GroupBody>
      <GroupLabel>Favorites</GroupLabel>
    </Group>
    <Divider />
    <CollapseSlot><Chevron dir="up" w={19} sw={3} color="#222" /></CollapseSlot>
  </RibbonBar>
);

/* ---------- workspace shell ---------- */
const Shell = styled.div`
  width: 3072px;
  height: 1838px;
  overflow: hidden;
  display: flex;
  flex-direction: column;
  background: ${c.bar};
`;
const Workspace = styled.main`
  display: flex;
  gap: 12px;
  flex: 1;
  padding: 12px 12px 11px 11px;
  background: ${c.shell};
`;
const Footer = styled.footer`
  height: 13px;
  border-top: 2px solid #c0c1c1;
  background: #eeeeee;
`;
const Panel = styled.aside`
  display: flex;
  flex-direction: column;
  width: 500px;
  border: 2px solid ${c.line};
  border-radius: 8px 8px 0 0;
  background: ${c.bar};
`;
const PanelHead = styled.div`
  display: flex;
  align-items: center;
  gap: 12px;
  height: 64px;
  padding: 0 13px 2px 13px;
`;
const PanelTitle = styled.h2`
  flex: 1;
  margin: 0;
  padding-top: 2px;
  font-size: 28.5px;
  font-weight: 400;
  color: #161616;
  letter-spacing: 0.1px;
`;
const HeadSlot = styled.span`
  display: flex;
  justify-content: center;
  width: 24px;
`;
const HeadTools = () => (
  <>
    <HeadSlot><Chevron w={15} sw={2.6} /></HeadSlot>
    <Pin />
    <Cross size={23} />
  </>
);
const SearchRow = styled.div`
  display: flex;
  align-items: center;
  gap: 14px;
  padding: 2px 6px 0 8px;
`;
const SearchInput = styled.div`
  display: flex;
  align-items: center;
  flex: 1;
  height: 48px;
  padding: 0 12px 0 10px;
  border: 2px solid #949494;
  background: #fff;
  font-style: italic;
  gap: 24px;
  span { flex: 1; padding-top: 1px; }
`;
const IconTabs = styled.div<{ $ml: number; $mt: number; $h: number }>`
  display: flex;
  width: 256px;
  height: ${(p) => p.$h}px;
  margin: ${(p) => p.$mt}px 0 0 ${(p) => p.$ml}px;
  box-shadow: inset 0 -2px #c8c8c8;
`;
const IconTab = styled.div<{ $on?: boolean; $lift?: number }>`
  display: flex;
  align-items: center;
  justify-content: center;
  width: 64px;
  padding-bottom: ${(p) => p.$lift ?? 5}px;
  border-bottom: 6px solid ${(p) => (p.$on ? c.blue : "transparent")};
`;
const DrawingOrder = styled.h3`
  margin: 22px 0 9px 31px;
  font-size: 25px;
  line-height: 40px;
  font-weight: 600;
  letter-spacing: 0.1px;
  color: ${c.text};
`;
const TreeRow = styled.div<{ $pl: number; $h?: number; $bold?: boolean }>`
  display: flex;
  align-items: center;
  height: ${(p) => p.$h || 48}px;
  padding-left: ${(p) => p.$pl}px;
  font-weight: ${(p) => (p.$bold ? 700 : 400)};
  letter-spacing: -0.08px;
  white-space: nowrap;
`;
const Gap = styled.i<{ $w: number }>`
  flex: none;
  width: ${(p) => p.$w}px;
`;
const Selected = styled.div`
  display: flex;
  align-items: center;
  flex: 1;
  height: 48px;
  margin-right: 2px;
  padding-left: 2px;
  border: 1.500px solid #1878bd;
  background: #c5daee;
`;
const Swatch = styled.div<{ $c: string; $bw?: number }>`
  width: 40px;
  height: 32px;
  margin: 4px 0 10.300px 121px;
  border: ${(p) => p.$bw || 3}px solid ${(p) => p.$c};
`;
const Box = styled.span`
  display: flex;
  align-items: center;
  justify-content: center;
  flex: none;
  width: 28px;
  height: 28px;
  border: 2px solid #8f8f8f;
  border-radius: 5px;
  background: #fff;
`;
const RaisedBox = styled.span`
  display: flex;
  margin-bottom: 5px;
`;
const Check = ({ on }: { on?: boolean }) => (
  <Box>
    {on && (
      <svg width="22" height="18" viewBox="0 0 22 18" fill="none">
        <path d="M2 9 L8 14 L20 3" stroke="#4a4a4a" strokeWidth="4" />
      </svg>
    )}
  </Box>
);
const Expander = ({ open = true }: { open?: boolean }) => (
  <svg width="13" height="14" viewBox="0 0 13 14">
    {open ? <path d="M13 0 V13 H0 Z" fill="#6a6a6a" /> : <path d="M1.500 1 L9.500 7 L1.500 13 Z" fill="#fff" stroke="#7a7a7a" strokeWidth="1.600" />}
  </svg>
);

const layers: [string, boolean, string, number?][] = [
  ["Mpio25899_MOT2013", true, "#ffaa00"],
  ["Mpio25899_DANE2020", false, "#8400a8"],
  ["Mpio25899_FormulacionPOT...", false, "#a80000"],
  ["Mpio25899_DiagnosticoPOT2...", false, "#000000"],
  ["MOT", true, "#222222", 2],
];
const others = [
  "Veredas (DANE 2020)",
  "CRVeredas_2020 (Veredas Col...",
  "Veredas (2013 formulación P...",
  "Veredas (2010 diagnóstico PO...",
  "Veredas (2010 diagnóstico POT)",
  "TERRENO_PREDIO_RURAL",
];

const Contents = () => (
  <Panel>
    <PanelHead><PanelTitle>Contents</PanelTitle><HeadTools /></PanelHead>
    <SearchRow>
      <Icon w={28} h={34}>
        <path d="M1 2 H25 V6 L16 16 V32 H10 V16 L1 6 Z" fill="#fafafa" stroke="#6e6e6e" strokeWidth="2" />
        <path d="M3 7 H24 L15 16 H11 Z" fill="#a4a4a4" />
      </Icon>
      <SearchInput><span>Search</span><SearchGlyph /><Chevron w={15} color="#6a6a6a" /></SearchInput>
    </SearchRow>
    <IconTabs $ml={30} $mt={10} $h={75}>
      <IconTab $on>
        <Icon w={44} h={48}>
          <path d="M9 16 V40 H28 M9 24 H28" stroke="#6e6e6e" strokeWidth="2" />
          <path d="M4 2 H15 L18 12 H1 Z M0 14 H18 V18 H0 Z M30 20 H40 L44 29.500 H26 Z M30 36 H40 L44 45.500 H26 Z" fill="#e0cf4f" />
        </Icon>
      </IconTab>
      <IconTab>
        <Icon w={34} h={50}>
          <path d="M6 10 V21 H29 M6 13.500 H29 M6 32 V45.500 H29 M6 37 H29" stroke="#6e6e6e" strokeWidth="2" />
          <rect x="2" y="1.500" width="8" height="8" fill="#e8a590" stroke="#c8603f" strokeWidth="2" />
          <path d="M28 11 h5 v5 h-5z M28 19 h5 v5 h-5z" fill="#e8a590" stroke="#c8603f" strokeWidth="2" />
          <circle cx="6" cy="30" r="4" fill="#fbe48e" stroke="#b98842" strokeWidth="2" />
          <circle cx="30" cy="36" r="2.500" fill="#fbe48e" stroke="#b98842" strokeWidth="2" />
          <circle cx="30" cy="46" r="2.500" fill="#fbe48e" stroke="#b98842" strokeWidth="2" />
        </Icon>
      </IconTab>
      <IconTab>
        <Icon w={46} h={48}>
          <rect x="2" y="2" width="38" height="38" fill="#fafafa" stroke="#8e8e8e" strokeWidth="2" />
          <rect x="7.500" y="7.500" width="27" height="27" stroke="#5e5e5e" strokeWidth="2" />
          <MapArt x={9} y={9} w={24} h={24} />
          <path d="M23 29 H48 V46 H23 Z" fill={c.bar} />
          <path d="M25 31.500 H47 M25 37.500 H47 M25 43.500 H47" stroke="#5e5e5e" strokeWidth="2" />
        </Icon>
      </IconTab>
      <IconTab>
        <Icon w={48} h={50}>
          <g fill="#fafafa" stroke="#6e6e6e" strokeWidth="2">
            <rect x="2" y="2" width="36" height="38" />
            <rect x="6" y="6" width="36" height="38" />
            <rect x="10" y="10" width="36" height="38" />
          </g>
          <MapArt x={13} y={13} w={30} h={21} blue />
          <path d="M14 38 H30 M14 43 H24" stroke="#6e6e6e" strokeWidth="2" />
          <path d="M37 38 L41 43 H33 Z" fill={c.sky} />
        </Icon>
      </IconTab>
    </IconTabs>
    <DrawingOrder>Drawing Order</DrawingOrder>
    <TreeRow $pl={12} $h={47}><Expander /><Gap $w={12} /><LayoutIcon32 /><Gap $w={6} />Layout</TreeRow>
    <TreeRow $pl={44} $bold>
      <Expander /><Gap $w={9} />
      <Selected>
        <RaisedBox><Check on /></RaisedBox>
        <Gap $w={12} />
        <Icon w={30} h={28}>
          <rect x="2" y="13" width="19" height="11" fill="#f2c08a" stroke="#a87844" strokeWidth="2" />
          <path d="M17 12 Q16 2 23 2 Q28 3 27 11" stroke="#a87844" strokeWidth="5" />
          <path d="M17 12 Q16 2 23 2 Q28 3 27 11" stroke="#f2c08a" strokeWidth="2" />
          <rect x="9.500" y="16" width="4" height="5" fill="#5e5e5e" />
        </Icon>
        <Gap $w={2} /><MapIcon32 frame /><Gap $w={10} />Map Frame
      </Selected>
    </TreeRow>
    <TreeRow $pl={69}><Expander /><Gap $w={9} /><MapIcon32 /><Gap $w={9} />CountyLimit</TreeRow>
    {layers.map(([name, on, color, bw]) => (
      <React.Fragment key={name}>
        <TreeRow $pl={91}><Expander /><Gap $w={9} /><Check on={on} /><Gap $w={10} />{name}</TreeRow>
        <Swatch $c={color} $bw={bw} />
      </React.Fragment>
    ))}
    <TreeRow $pl={135} $bold>Charts</TreeRow>
    <TreeRow $pl={135}>
      <Icon w={32} h={32}>
        <path d="M5 31 V15 M9 31 V19 M13 31 V10 M17 31 V3 M21 31 V9 M25 31 V15 M29 31 V20" stroke="#69b2e2" strokeWidth="2.200" />
        <path d="M1 0 V31 H32" stroke="#6e6e6e" strokeWidth="2" />
      </Icon>
      <Gap $w={20} />Distribution of AGha
    </TreeRow>
    {others.map((n) => (
      <TreeRow key={n} $pl={91}><Gap $w={6} /><Expander open={false} /><Gap $w={3} /><Check /><Gap $w={10} />{n}</TreeRow>
    ))}
    <TreeRow $pl={113}><Check /><Gap $w={10} />Topographic</TreeRow>
  </Panel>
);

/* ---------- document area ---------- */
const DocArea = styled.div`
  display: flex;
  flex-direction: column;
  width: 1898px;
`;
const DocTabs = styled.div`
  display: flex;
  height: 44px;
  padding: 0 10px 0 12px;
  align-items: center;
`;
const DocTab = styled.div<{ $w: number; $on?: boolean }>`
  display: flex;
  align-items: center;
  gap: 10px;
  height: 44px;
  width: ${(p) => p.$w}px;
  padding-top: 4px;
  color: ${(p) => (p.$on ? "#5a5a5a" : "#161616")};
  letter-spacing: -0.2px;
  ${(p) => p.$on && css`background: #d3d4d8; border-radius: 9px 9px 0 0; padding-left: 12px;`}
`;
const TabClose = styled.span`
  display: flex;
  margin-left: 8px;
`;
const DocBody = styled.div`
  display: grid;
  flex: 1;
  grid-template-columns: 40px 1fr 34px;
  grid-template-rows: 40px 1fr 34px 48px;
  border: 2px solid ${c.line};
  border-top: 6px solid #d3d4d8;
  background: #fafafa;
`;
const Canvas = styled.div`
  position: relative;
  overflow: hidden;
  background: #e0e0df;
`;
const Sheet = styled.div`
  position: absolute;
  left: 83px;
  top: 75px;
  width: 1656px;
  height: 1172px;
  background: #fff;
  box-shadow: 0 0 0 1.500px #b4b4b4, 0 3px 5px #aaa;
`;
const ScrollV = styled.div`
  display: flex;
  flex-direction: column;
  align-items: center;
  background: ${c.shell};
  padding: 11px 0;
`;
const ScrollH = styled.div`
  display: flex;
  align-items: center;
  background: ${c.shell};
  padding: 0 11px;
`;
const Thumb = styled.i<{ $w: number; $h: number; $mt?: number; $ml?: number }>`
  width: ${(p) => p.$w}px;
  height: ${(p) => p.$h}px;
  margin: ${(p) => p.$mt || 0}px auto auto auto;
  border-radius: 9px;
  background: #b3b3b3;
`;
const ThumbH = styled(Thumb)`
  margin: 0 auto 0 ${(p) => p.$ml}px;
`;

const unit = 139.33;
const HRuler = () => {
  const ticks = [];
  for (let i = -5; i <= 124; i++) {
    const x = 650.3 - 565 + (i * unit) / 10;
    if (x > 1816) break;
    ticks.push(<path key={i} d={`M${x} ${i % 10 === 0 ? 2 : i % 5 === 0 ? 22 : 24} V38`} />);
  }
  return (
    <svg width="1820" height="40">
      <rect x="1.500" y="1" width="1818" height="37.500" fill={c.bar} stroke="#555" strokeWidth="2.600" />
      <g stroke="#5a5a5a" strokeWidth="1.400">{ticks}</g>
      {Array.from({ length: 13 }, (_, i) => (
        <SvgText key={i} $size={20.5} $color="#6e6e6e" x={93.5 + i * unit} y="19" letterSpacing="-0.7">{i * 100}</SvgText>
      ))}
      <path d="M521.500 3 V38" stroke="#444" strokeWidth="1.400" strokeDasharray="2 2" />
    </svg>
  );
};
const VRuler = () => {
  const ticks = [];
  for (let i = -5; i <= 88; i++) {
    const y = 1655 - 407 - (i * unit) / 10;
    ticks.push(<path key={i} d={`M${i % 10 === 0 ? 2 : i % 5 === 0 ? 22 : 24} ${y} H38`} />);
  }
  return (
    <svg width="40" height="1323">
      <rect x="2" y="1.500" width="37" height="1320" fill={c.bar} stroke="#555" strokeWidth="2.600" />
      <g stroke="#5a5a5a" strokeWidth="1.600">{ticks}</g>
      {Array.from({ length: 9 }, (_, i) => (
        <g key={i} transform={`translate(19 ${1248 - i * unit - 7}) rotate(-90)`}>
          <SvgText $size={20.5} $color="#6e6e6e" letterSpacing="-0.7">{i * 100}</SvgText>
          {i === 0 && <SvgText $size={20.5} $color="#6e6e6e" x="6">0</SvgText>}
        </g>
      ))}
      <path d="M3 37 H24" stroke="#444" strokeWidth="1.600" strokeDasharray="2 2" />
    </svg>
  );
};

/* Map linework: each block is digitised in its own local grid and placed by a transform. */
const north = {
  limit: [
    "272,1568 311,1502 175,1389 130,1379 131,1295 104,1267 99,1250 103,1235 117,1213 115,1200 108,1185 130,1183 154,1179 182,1168 205,1158 228,1153 250,1144 270,1133 287,1120 291,1105 300,1097 307,1070 312,1055 307,1042 310,1030 325,1005 328,993 344,974 346,958 349,945 345,915 340,895 340,862 322,845 320,832 302,808 325,802 349,797 347,785 340,775 339,730 334,690 325,662 318,645 326,620 335,595 337,565 332,545 342,523 355,505 370,497 390,491 393,478 400,474 418,475 440,480 446,455 441,430 434,405 430,380 425,372 400,372 393,363 386,357 402,350 407,336 405,325 419,318 401,303 397,277 390,264 405,252 418,233 435,222 456,192 485,150 490,135 486,82 490,77 505,97 537,118 548,146 558,168 580,188 600,197 630,214 650,210 668,203 680,182 700,161 715,143 740,141 757,137 775,124 796,92 796,83 830,98 837,132 860,163 874,173 890,208 908,232 925,240 956,233 955,240 935,262 905,300 870,355 864,397 871,392 871,374 880,371 912,388 923,378 908,365 917,354 935,350 972,350 976,363 985,372 1010,379 1014,374 1020,388 1040,391 1060,386 1080,387 1082,383 1120,393 1145,405 1160,414 1185,417 1200,426 1215,443 1232,444 1243,441 1272,465 1285,462 1315,470 1325,474 1366,508 1335,553 1315,573 1300,602 1280,625 1260,648 1235,665 1222,683 1213,707 1235,711 1257,722 1277,733 1300,762 1307,760 1354,808 1335,833 1325,862 1320,865 1318,882 1303,905 1300,945 1292,968 1280,982 1250,985 1241,995 1238,1020 1218,1035 1200,1065 1163,1074 1144,1105 1146,1125 1161,1152 1153,1190 1146,1250 1130,1290 1107,1334 1058,1332 1050,1350 1044,1382 1056,1387 1050,1410 1300,1410",
  ],
  thin: [
    "580,188 572,201 553,195 518,181 509,226 500,220 486,232 484,242 458,270 455,292 469,320 466,333 440,365 425,366 425,373",
    "340,775 365,783 383,773 384,745 404,750 411,738 422,742 432,807 406,815 416,823 394,850 402,869 425,873 424,892 407,897 406,912 388,915 365,955 358,977 346,970",
    "1170,415 1152,445 1145,455 1135,452 1085,449 1076,438 1069,455 1078,460 1073,482 1050,487 1060,494 1073,515 1070,530 1052,525 1055,538 1038,537 1043,553 1033,563 1018,562 1010,577 995,583 1007,598 1025,603 1028,615 1065,624 1063,635 1083,651 1040,671 1055,697 1069,712 999,747 962,724 930,796 839,857 835,890 842,897 822,945 829,950 787,990 766,988 737,1023 752,1028 748,1040 731,1045 715,1105 672,1105 655,1107",
    "1257,722 1240,725 1219,753 1217,770 1205,788 1190,793 1165,807 1140,815 1124,856 1100,858 1060,876 1000,915 999,925 988,940 948,952 915,987 908,1005 890,1030 865,1083 850,1130 838,1158 832,1175 832,1262 840,1270 855,1345 872,1435 890,1452 965,1477 1015,1502 1057,1485 1056,1460 1046,1410",
    "855,1347 820,1345 815,1353 800,1343 789,1350 787,1375 765,1372 750,1360 722,1360 684,1384 730,1415 747,1420 755,1440 800,1462 810,1475 848,1490 862,1520 866,1568",
  ],
  thick: [
    "672,1107 655,1107 653,1137 632,1142 615,1155 605,1150 575,1167 597,1175 599,1188 588,1205 570,1215 566,1238 545,1238 527,1232 515,1242 480,1230 447,1236 445,1262 430,1282 414,1297 414,1305 395,1332 380,1360 389,1375 370,1400 350,1430 341,1452 400,1458 480,1464 482,1500 430,1502 425,1542 388,1541 386,1560 410,1568",
    "672,1107 668,1140 661,1172 666,1203 692,1210 695,1220 729,1238 704,1273 716,1285 722,1272 745,1267 753,1272 750,1298 740,1305 745,1316 731,1325 755,1332 780,1335 798,1331 830,1342 855,1345 860,1390 872,1440",
  ],
};
const west = {
  limit: [
    "311,277 285,335 258,388 234,432 215,480 200,525 195,610 190,650 182,685 194,705 196,725 225,747 240,749 260,764 275,768 285,778 302,780 303,790 312,795 345,797 380,803 395,810 415,818 430,810 448,815 462,823 478,813 500,815 512,810 530,810 535,820 520,827 535,842 525,855 505,858 503,866 518,866 512,880 500,890 507,910 495,915 486,903 490,918 498,922 495,965 500,990 512,1010 530,1020 532,1030 517,1020 515,1035 525,1050 535,1062 548,1052 560,1065 555,1085 570,1075 568,1090 590,1100 600,1105 605,1115 640,1120 650,1112 663,1132 670,1125 690,1133 700,1130 723,1147 727,1175 732,1200 750,1218 765,1220 780,1232 820,1240 845,1260 872,1273 885,1297 890,1325 905,1345 930,1390 966,1412 971,1457 1015,1432 1055,1412 1075,1390 1100,1380 1115,1365 1155,1342 1180,1310 1228,1280 1220,1253 1240,1238 1270,1230 1283,1215 1263,1185 1262,1162 1270,1135 1270,1122 1322,1117 1345,1108 1370,1094",
  ],
  thin: [
    "747,172 755,192 775,210 800,222 812,243 848,262 860,300 867,355 880,360 908,370 945,430 965,436 1012,420 1040,375 1057,367 1042,350 1042,335 1050,322 1062,318 1080,325 1095,355",
    "1163,320 1190,330 1197,318 1225,340 1240,338 1245,312 1215,278 1197,228 1210,236 1250,240 1264,165",
    "1297,370 1309,378 1309,422 1289,425",
    "1312,290 1329,307 1316,335 1332,342 1340,310 1375,305 1430,300 1437,303 1440,264 1448,300",
    "1280,345 1332,345 1328,362 1290,360",
    "1285,352 1330,352",
    "1297,530 1313,525 1335,540 1338,565 1325,575 1290,575",
    "1338,565 1348,575 1352,620 1365,625 1372,640 1366,740 1368,800 1380,842 1430,860 1428,875 1440,895 1437,933 1391,918 1393,955 1450,962 1485,970 1525,990 1538,985 1568,900",
    "1366,740 1398,740 1398,752 1410,756 1440,784 1455,780 1482,738 1544,738",
    "1215,732 1250,722 1290,715 1320,695 1372,640",
    "1028,668 1060,660 1088,655 1085,665 1040,673 1030,685 1028,668",
    "1022,583 1024,570 1005,563 980,558 960,562 945,573 918,585 918,597 930,600 920,608 925,640 920,680 862,745 857,780 857,800 840,800 790,805 740,802 675,825 640,810 615,808 600,855 602,862 590,883 605,900 606,940 590,960 598,978 585,1003 597,1020 597,1045 622,1085 620,1097 600,1100",
    "1285,797 1328,796 1378,828 1380,842",
    "1357,835 1375,830 1380,860 1357,860 1357,835",
    "1393,955 1376,965 1375,1000 1387,1040 1387,1095",
    "1430,860 1437,845 1490,853 1500,828 1544,738",
    "965,1007 990,998 1028,973 1030,985 1018,1000 1015,1017 1005,1007 990,1010 970,1015 965,1007",
    "1500,828 1510,850 1540,862 1568,858",
  ],
  thick: [
    "480,227 482,273 430,275 427,327 388,325 386,350 407,358 402,386 385,387 360,432 348,430 344,458 370,463 368,491 348,490 332,527 346,540 326,588 298,576 289,595 293,642 275,636 262,645 243,654 230,648 220,661 196,610",
    "600,213 608,211 615,215 625,208 640,210 645,202 658,195 674,222 655,242 651,262 625,270 610,292 597,300 587,290 585,265 590,235 600,213",
    "570,378 585,378 598,418 614,430 612,444 592,442 584,415 570,378",
    "855,107 830,108 825,140 813,155 817,180 798,190 795,207 862,215 864,228 875,235 877,222 866,205 864,150 855,107",
    "872,205 905,250 918,268 912,285 940,330 955,380 965,395 957,432 985,425 1012,420 1000,356 1032,345 1030,310 1034,275 1055,262 1057,253 1070,258 1090,257 1130,280 1150,300 1160,318 1181,348 1165,353 1165,365 1145,362 1125,374 1092,357 1092,370 1087,375 1092,405 1110,428 1115,448 1090,453 1085,462 1135,483 1150,490 1175,490 1180,498 1215,500 1212,480 1225,473 1240,480 1240,510 1250,545 1248,590 1240,600 1213,587 1202,603 1225,630 1230,660 1238,685 1215,725",
    "1266,160 1262,200 1278,210 1278,255 1265,262 1250,265 1256,285 1268,272 1295,273 1312,290 1303,328 1275,332 1297,370 1285,378 1289,425 1316,430 1312,440 1312,465 1300,475 1302,508 1270,515 1272,527 1297,530 1280,550 1290,575 1310,583 1323,595 1290,655 1240,695 1215,725",
    "1022,583 1055,578 1060,558 1070,560 1103,530 1110,550 1125,570 1140,585 1140,597 1165,600 1168,635 1185,660 1188,690 1190,720 1180,738 1160,745 1157,775 1145,773 1130,790 1085,787 1065,805 1045,798 985,812 960,800 953,765 985,738 1000,710 1018,690 1013,660 1028,663 1055,650 1087,650 1086,622 1055,620 1050,605 1035,608 1030,630 1015,635 1000,620 1003,592 1022,583",
    "1183,735 1218,733 1222,750 1240,765 1255,775 1285,797 1270,825 1295,858 1305,847 1316,862 1327,897 1338,865 1345,880 1365,888 1366,915 1360,940 1345,968 1360,1003 1350,1015 1330,1020 1325,1045 1332,1075 1332,1100 1322,1115",
    "1180,735 1183,752 1195,757 1215,775 1225,790 1222,810 1208,818 1197,860 1195,945 1190,1003 1165,998 1160,1045 1150,1060 1140,1080 1110,1090 1080,1130 1090,1150 1085,1162 1055,1160 1036,1172 1035,1185 1047,1217 1085,1222 1078,1270 1058,1272 1055,1240 1040,1220 1025,1230 1025,1245 1042,1270 1025,1280 1023,1295 995,1312 975,1328 950,1325 960,1285 925,1287 918,1305 905,1315 902,1340",
    "1208,818 1200,813 1193,820 1198,830 1207,828",
    "1110,907 1075,928 1055,957",
  ],
};
const river =
  "1026,1150 1012,1152 998,1172 995,1148 985,1145 970,1160 960,1170 962,1195 945,1215 943,1240 935,1258 922,1275 905,1258 880,1267 878,1305 862,1300 860,1290 848,1312 835,1302 820,1315 803,1297 790,1312 770,1297 740,1285 735,1250 748,1240 735,1232 718,1242 725,1195 752,1160 745,1140 728,1112 736,1075 728,1050 715,1045 722,1000 710,978 690,968 665,975 655,945 630,940 628,905 620,890 610,888 603,912 595,895 570,898 540,908 530,895 505,910 510,935 525,950 510,948 490,930 465,933 450,950 447,970 455,985 450,998 440,980 422,982 420,1005 416,1045 436,1060 438,1090 443,1120 420,1138 408,1115 400,1120 402,1145 385,1165 365,1190 380,1220 355,1270 340,1255 315,1232 285,1231";
const east = {
  limit: [
    "0,100 117,100 117,114 210,112 238,118 250,133 262,142 268,132 278,134 300,120 312,122 333,110 350,130 365,150 370,134 386,134 410,165 437,188 462,160 485,133 532,175 530,187 560,187 575,178 590,167 620,181 632,178 662,202 680,197 727,226 790,196 850,170 885,166 900,158 914,185 908,240 918,265 918,292 928,312 945,295 960,290 975,268 990,243 1008,240 1016,208 1030,225 1062,222 1078,184 1095,185 1115,190 1135,170 1152,178 1157,200 1160,235 1185,254 1200,262 1240,274 1265,270 1280,290 1295,320 1345,355 1370,360 1435,390 1468,386 1450,420 1412,424 1388,455 1382,490 1340,520 1295,557 1240,588 1195,607 1175,620 1155,622 1135,645 1085,684 1045,688 1030,670 1008,645 984,663 982,690 994,705 988,718 972,725 972,742 1038,962 1089,975 1085,1010 1075,1040 1065,1080 1068,1095 1052,1125 1026,1135",
    "285,1231 283,1195 275,1120 268,1095 248,1050 196,1036 178,1034 150,1048 135,1057 88,1062 80,1100 82,1130 101,1156 90,1168 60,1178 42,1190 47,1220 0,1255",
  ],
  thin: [
    "254,145 275,153 285,148 300,143 318,150 320,178 343,190 325,195 310,185 285,203 262,210 278,240 300,235 325,245",
    "245,243 248,210 260,235 275,245",
    "365,150 362,180 372,192 350,215 330,235 365,265 358,290 362,308 348,318 394,382 340,410 333,455 320,465 312,520 270,577 305,622 328,572 368,625 345,660 378,690 380,680 412,692 475,645 515,610 535,560 525,530 500,525 460,513 440,578 412,675 380,635 400,600 412,540 433,545",
    "330,240 370,215 400,222 437,185",
    "400,222 435,245 437,275 487,290 530,293 525,325 490,440 470,495 490,502 525,345 540,338 540,322 520,322",
    "487,293 482,325 482,380 470,440 457,460 470,488",
    "490,290 482,325 502,330 580,297",
    "492,280 515,250 545,222 560,240 568,258 580,258 570,290 580,310 578,345 555,410 570,445 570,485 590,500 595,535 610,530 625,558 665,545 685,527",
    "565,242 622,180",
    "535,340 525,435 510,432 525,365",
    "485,440 520,432 570,442",
    "622,480 592,445 607,400 645,412 648,400 680,408 685,375 695,370 690,345 740,385 738,420 722,425 715,455 735,465 748,490 740,540 725,550 622,480 597,525",
    "700,537 738,537",
    "658,202 632,243 650,280 665,300 670,325 705,308 742,335 722,370 700,357 690,345",
    "658,200 615,225 632,245",
    "733,288 745,278 780,270 782,285 805,315 820,295 853,327 833,353 760,308 745,308 733,288",
    "912,290 908,312 850,342 835,370 820,392 780,397 765,420 755,500 742,575 650,655 632,720 636,755 680,815 680,828 655,836 570,838 518,866 475,870 460,900 388,970 390,1020 398,1090 285,1195",
    "908,232 892,238 892,270 912,290",
    "1022,305 940,335 905,385 893,430 840,505 820,577",
    "485,700 569,765 558,798 466,735 485,700",
    "362,706 378,717 395,710 398,735 402,745 385,770 375,778 337,762 336,748 362,706",
    "378,717 362,752 345,755",
    "420,458 437,465 422,508 410,500 420,458",
    "465,515 525,535",
    "475,525 508,535 500,560 472,548 475,525",
    "465,475 445,478 432,510 445,578 460,583 515,602 460,595",
    "445,580 460,585 455,607 438,603",
    "340,680 300,765 310,790 340,802 378,796 345,915 325,930",
    "1010,475 1028,500 995,515",
    "990,520 985,560 1003,605 1000,635",
    "760,1230 790,1250",
    "375,178 372,196",
    "380,170 386,174 380,178",
  ],
  thick: [
    "1160,235 1150,258 1140,293 1120,280 1130,262 1108,245 1075,235 1060,240 1040,268 1000,280 978,292 975,305 1000,290 1035,293 1015,308 1022,320 1010,325 1003,357 1028,372 1018,460 1003,465 998,432 990,460 970,437 963,450 988,485 990,510 978,520 972,545 985,590 985,615 1008,645",
    "820,577 875,580 925,513 928,570 935,600 935,640 955,680 980,688",
    "820,577 770,597 745,583 730,595 732,620 705,665 712,690 730,715 722,735 735,745 748,775 746,800 735,820 738,870 755,885 757,925 745,928 760,945 772,968 765,982 745,985 750,1010 740,1050",
    "742,1092 785,1125 830,1132 855,1115 888,1115 870,1145 805,1205 792,1250 830,1245 860,1200 870,1198 905,1150 950,1085 960,1080 965,1040 1000,1010 1038,962 985,980 940,997 922,1030 910,1035 893,1038 885,1000 865,972 885,970 922,912 897,853 925,795 972,748",
  ],
};

const Limit = styled.polyline`
  fill: none;
  stroke: #e8a21c;
  stroke-width: 1.8px;
  vector-effect: non-scaling-stroke;
`;
const Thin = styled(Limit)`
  stroke: #505050;
  stroke-width: 1.2px;
`;
const Thick = styled(Limit)`
  stroke: #3a3a3a;
  stroke-width: 2.1px;
`;
const Bank = styled(Limit)<{ $c: string; $w: number }>`
  stroke: ${(p) => p.$c};
  stroke-width: ${(p) => p.$w}px;
  stroke-linejoin: round;
`;
type Lines = { limit: string[]; thin: string[]; thick: string[] };
const Linework = ({ d, t, children }: { d: Lines; t: string; children?: React.ReactNode }) => (
  <g transform={t}>
    {children}
    {d.thin.map((p, i) => <Thin key={i} points={p} />)}
    {d.thick.map((p, i) => <Thick key={i} points={p} />)}
    {d.limit.map((p, i) => <Limit key={i} points={p} />)}
  </g>
);
const handles: [number, number][] = [
  [686.5, 512.5], [1329.5, 512.5], [1973.5, 512.5], [686.5, 1070], [1973.5, 1070], [1329.5, 1626.5], [1973.5, 1626.5],
];
const MapView = () => (
  <svg width="1656" height="1172" viewBox="648 482 1656 1172">
    <Linework d={east} t="translate(1240 1100) scale(0.38265 0.33333)">
      <Bank points={river} $c="#4a4a4a" $w={13} />
      <Bank points={river} $c="#fff" $w={10.6} />
      <Bank points={river} $c="#4a4a4a" $w={6} />
      <Bank points={river} $c="#fff" $w={3.6} />
      <polygon points={`${river} 285,1360 1060,1360`} fill="#fff" />
      <Limit points={river} />
    </Linework>
    <Linework d={west} t="translate(820 1080) scale(0.35714 0.33333)" />
    <Linework d={north} t="translate(820 540) scale(0.35714 0.42091)" />
    <SvgText $size={6.4} $color="#f0b040" x="1102" y="1217.500" textLength="43">A (ha): 19522.39</SvgText>
    <SvgText $size={6.4} $color="#f0b040" x="1102" y="1225.500" textLength="43">P (m):107645.57</SvgText>
    <rect x="686.500" y="512.500" width="1287" height="1114" fill="none" stroke="#3a3a3a" strokeWidth="1.600" />
    {handles.map(([x, y]) => (
      <rect key={`${x}${y}`} x={x - 4} y={y - 4} width="8" height="8" fill="#fff" stroke="#3a3a3a" strokeWidth="2" />
    ))}
    <rect x="682" y="1622" width="9" height="9" fill="#2e2e2e" />
  </svg>
);

/* ---------- status bar ---------- */
const Status = styled.div`
  grid-column: 2 / 4;
  display: flex;
  align-items: center;
  background: ${c.bar};
  padding-left: 10px;
  white-space: nowrap;
`;
const Combo = styled.div<{ $w: number; $border?: boolean }>`
  display: flex;
  align-items: center;
  justify-content: space-between;
  width: ${(p) => p.$w}px;
  height: 44px;
  padding: 0 9px 0 11px;
  border: 2px solid ${(p) => (p.$border ? "#949494" : "#fff")};
  background: #fff;
  color: #222;
  letter-spacing: -0.400px;
`;
const Sep = styled.i<{ $m: string }>`
  width: 2px;
  height: 28px;
  margin: ${(p) => p.$m};
  background: #9a9a9a;
`;
const SnapButton = styled.div`
  display: flex;
  align-items: center;
  justify-content: center;
  width: 41px;
  height: 40px;
  margin: 0 9px 3px 0;
  border: 2px solid #00619b;
  background: #9ccbee;
`;
const Coords = styled.div`
  width: 186px;
  margin: 0 402px 0 395px;
  letter-spacing: -0.200px;
`;
const SelectedBox = styled.div`
  display: flex;
  align-items: center;
  gap: 7px;
  width: 272px;
  height: 40px;
  padding-left: 6px;
  background: #fff;
  letter-spacing: -0.100px;
`;
const Caret = () => <svg width="10" height="7"><path d="M0 0 H10 L5 7 Z" fill="#4a4a4a" /></svg>;
const Fill = styled.i`
  flex: 1;
`;

const Doc = () => (
  <DocArea>
    <DocTabs>
      <DocTab $w={206}><MapIcon32 />POTLayer</DocTab>
      <DocTab $w={236}><MapIcon32 />CountyLimit</DocTab>
      <DocTab $w={244}><MapIcon32 />PopulationGIS</DocTab>
      <DocTab $w={177} $on><LayoutIcon32 />Layout<TabClose><Cross size={21} color="#6a6a6a" /></TabClose></DocTab>
      <Fill />
      <Chevron w={15} color="#5e5e5e" />
    </DocTabs>
    <DocBody>
      <span />
      <HRuler />
      <span />
      <VRuler />
      <Canvas><Sheet><MapView /></Sheet></Canvas>
      <ScrollV>
        <Chevron dir="up" w={13} color="#5e5e5e" sw={2} />
        <Thumb $w={17} $h={658} $mt={310} />
        <Chevron w={13} color="#5e5e5e" sw={2} />
      </ScrollV>
      <span />
      <ScrollH>
        <Chevron dir="left" w={12} color="#5e5e5e" sw={2} />
        <ThumbH $w={919} $h={18} $ml={428} />
        <Chevron dir="right" w={12} color="#5e5e5e" sw={2} />
      </ScrollH>
      <span />
      <span />
      <Status>
        <Combo $w={200} $border>1:30,344<Caret /></Combo>
        <Sep $m="0 18px 0 9px" />
        <Combo $w={101}>18 %<Caret /></Combo>
        <Sep $m="0 8px 0 7px" />
        <SnapButton>
          <Icon w={32} h={32}>
            <path d="M3 3 H21 V21 H3 Z M12 3 V21 M3 12 H21" stroke="#7a8b96" strokeWidth="1.800" />
            <path d="M24 18 V32 M17 25 H31" stroke="#9ccbee" strokeWidth="6" />
            <path d="M23 14 V32 M14 24 H32" stroke="#56789a" strokeWidth="1.800" />
            <path d="M27 20 V32 M20 28 H32" stroke="#d3e9f8" strokeWidth="2" />
          </Icon>
        </SnapButton>
        <Chevron w={14} color="#222" />
        <Sep $m="0 0 0 19px" />
        <Coords>278.827 , 868.101</Coords>
        <SelectedBox>
          <Icon w={33} h={32}>
            <path d="M11 2 H30 V22 H20 Z" fill="#d3e9f8" />
            <path d="M11 8 V2 H30 V22 H24 M16 4 L22 12 L29 4" stroke="#6e6e6e" strokeWidth="1.800" />
            <circle cx="10" cy="16" r="8" fill="#eaf5fc" stroke={c.sky} strokeWidth="2" />
            <path d="M10 11 V21 M5 16 H15" stroke={c.sky} strokeWidth="2" />
            <path d="M16 22 L24 31" stroke="#b98842" strokeWidth="3" />
          </Icon>
          Selected Elements: 1
        </SelectedBox>
        <Sep $m="0 16px 0 8px" />
        <Icon w={22} h={28}><path d="M5 0 V28 M17 0 V28" stroke="#6a6a6a" strokeWidth="7" /></Icon>
        <Sep $m="0 11px 0 17px" />
        <Icon w={34} h={32}>
          <path d="M4 14 Q6 4 17 4 Q24 4 28 9 M30 18 Q28 28 17 28 Q10 28 6 23" stroke={c.sky} strokeWidth="4.500" />
          <path d="M32 1 V14 H19 Z M2 31 V18 H15 Z" fill={c.sky} />
        </Icon>
      </Status>
    </DocBody>
  </DocArea>
);

/* ---------- element pane ---------- */
const RightCol = styled.div`
  display: flex;
  flex-direction: column;
  width: 627px;
`;
const ElementPanel = styled(Panel)`
  flex: 1;
  width: auto;
`;
const Subject = styled.div`
  height: 32px;
  line-height: 34px;
  padding-left: 13px;
  text-align: center;
  font-size: 27.500px;
  letter-spacing: 0.200px;
`;
const ModeRow = styled.div`
  display: flex;
  align-items: center;
  gap: 33px;
  margin: 19px 0 0 14px;
`;
const Mode = styled.span`
  width: 135px;
  height: 42px;
  line-height: 35px;
  border-bottom: 4px solid ${c.blue};
  font-size: 24px;
  font-weight: 600;
  letter-spacing: -0.100px;
  white-space: nowrap;
`;
const Heading = styled.h3`
  margin: 30px 0 0 12px;
  font-size: 25.500px;
  line-height: 36px;
  font-weight: 600;
  letter-spacing: -0.100px;
`;
const SubHeading = styled.h4<{ $mt: number }>`
  display: flex;
  align-items: center;
  gap: 8px;
  height: 32px;
  margin: ${(p) => p.$mt}px 0 0 25px;
  font-size: 24px;
  font-weight: 600;
`;
const FormBlock = styled.div<{ $mt: number }>`
  display: flex;
  margin: ${(p) => p.$mt}px 0 0 52px;
`;
const Fields = styled.div<{ $gap: number }>`
  display: flex;
  flex-direction: column;
  gap: ${(p) => p.$gap}px;
`;
const Field = styled.div<{ $label: number }>`
  display: grid;
  grid-template-columns: ${(p) => p.$label}px auto;
  justify-content: start;
  align-items: center;
  height: 44px;
`;
const FieldText = styled.span`
  padding-top: 2px;
`;
const Spin = styled.div<{ $w: number }>`
  display: flex;
  align-items: center;
  justify-content: flex-end;
  gap: 14px;
  width: ${(p) => p.$w}px;
  height: 44px;
  padding-right: 9px;
  border: 2px solid #949494;
  background: #fff;
`;
const SpinArrows = styled.span`
  display: flex;
  flex-direction: column;
  gap: 9px;
`;
const NumberField = ({ label, value, lw, w }: { label: string; value: string; lw: number; w: number }) => (
  <Field $label={lw}>
    <FieldText>{label}</FieldText>
    <Spin $w={w}>
      <FieldText>{value}</FieldText>
      <SpinArrows><Chevron dir="up" w={16} color="#7a7a7a" sw={2.4} /><Chevron w={16} color="#7a7a7a" sw={2.4} /></SpinArrows>
    </Spin>
  </Field>
);
const LinkButton = styled.div`
  display: flex;
  align-items: center;
  justify-content: center;
  align-self: center;
  width: 48px;
  height: 48px;
  margin-left: 21px;
  border: 2px solid #4a4a4a;
  background: #fafafa;
`;
const AnchorWrap = styled.div`
  margin: -2px 0 0 30px;
`;
const Anchors = () => (
  <svg width="104" height="108" viewBox="0 0 104 108">
    <rect x="14" y="14" width="76" height="81" fill="none" stroke="#111" strokeWidth="4" />
    {[0, 1, 2].map((r) =>
      [0, 1, 2].map((k) => {
        const on = r === 2 && k === 0;
        return <rect key={`${r}${k}`} x={1 + k * 38.2} y={1 + r * 40.5} width="25" height="25" fill={on ? "#9ccbee" : "#fff"} stroke={on ? "#00619b" : "#4a4a4a"} strokeWidth="2" />;
      })
    )}
  </svg>
);
const BottomTabs = styled.div`
  display: flex;
  height: 41px;
  padding-left: 12px;
  align-items: center;
`;
const BottomTab = styled.div<{ $w: number; $on?: boolean }>`
  width: ${(p) => p.$w}px;
  height: 41px;
  line-height: 41px;
  letter-spacing: -0.200px;
  white-space: nowrap;
  ${(p) => p.$on && css`
    margin-top: -4px;
    height: 43px;
    line-height: 45px;
    padding-left: 8px;
    color: ${c.blue};
    background: ${c.bar};
    border: 2px solid ${c.line};
    border-top: 0;
    border-radius: 0 0 8px 8px;
  `}
`;

const Callout = ({ x, y }: { x: number; y: number }) => (
  <g transform={`translate(${x} ${y})`}>
    <path d="M0 0 H28 V17 H11 L0 27 Z" fill="#fafafa" stroke={c.bar} strokeWidth="5" />
    <path d="M0 0 H28 V17 H11 L0 27 Z" fill="#fafafa" stroke="#6e6e6e" strokeWidth="2" />
    <path d="M10 5.500 H25 M10 12 H25" stroke="#6e6e6e" strokeWidth="2" />
    <path d="M3.500 3.500 h4 v4 h-4z M3.500 10 h4 v4 h-4z" fill="#7c67ab" />
  </g>
);

const ElementPane = () => (
  <RightCol>
    <ElementPanel>
      <PanelHead><PanelTitle>Element</PanelTitle><HeadTools /></PanelHead>
      <Subject>Map Frame</Subject>
      <ModeRow><Mode>Map Frame</Mode><Chevron w={15} color="#222" /></ModeRow>
      <IconTabs $ml={12} $mt={41} $h={70}>
        <IconTab $lift={12}>
          <Icon w={42} h={46}>
            <path d="M1 2 H37 L39 4 V43 H1 Z" fill="#fafafa" stroke="#6e6e6e" strokeWidth="2" />
            <path d="M5 10 H13 M5 15 H13 M5 20 H13 M5 25 H13 M5 30 H16 M5 35 H34" stroke="#69b2e2" strokeWidth="2" />
            <Callout x={15} y={9} />
          </Icon>
        </IconTab>
        <IconTab $lift={12}>
          <Icon w={46} h={46}>
            <rect x="2" y="2" width="42" height="42" fill="#fafafa" stroke="#8e8e8e" strokeWidth="2.400" />
            <rect x="5.500" y="5.500" width="35" height="35" stroke="#5e5e5e" strokeWidth="1.800" />
            <MapArt x={7} y={7} w={32} h={32} />
            <Callout x={18} y={10} />
          </Icon>
        </IconTab>
        <IconTab $lift={12}>
          <Icon w={46} h={46}>
            <rect x="2" y="2" width="42" height="42" stroke="#6e6e6e" strokeWidth="2" strokeDasharray="3 2" />
            <path d="M39 8 L19 30" stroke="#6e6e6e" strokeWidth="3.800" />
            <path d="M15 28 L20 32 Q18 38 8 38 Q11 30 15 28 Z" fill="#a87844" />
          </Icon>
        </IconTab>
        <IconTab $on $lift={12}>
          <Icon w={48} h={48}>
            <path d="M10 4 H47 M10 0 V8 M47 0 V8 M3 10 V46 M0 10 H7 M0 46 H7" stroke="#6e6e6e" strokeWidth="2" />
            <PageShape x={10} y={10} w={37} h={37} f={10} sw={2} />
            <path d="M14 14 H35 V22 H43 V38 H14 Z" fill="#b9daf0" />
            <path d="M22 25 L34 19 L40 31 L28 36 Z" fill="#d3e9f8" />
          </Icon>
        </IconTab>
      </IconTabs>
      <Heading>Placement</Heading>
      <SubHeading $mt={4}><Chevron w={16} sw={4} color="#5e5e5e" />Size</SubHeading>
      <FormBlock $mt={9}>
        <Fields $gap={18}>
          <NumberField label="Width" value="925 mm" lw={126} w={201} />
          <NumberField label="Height" value="800 mm" lw={126} w={201} />
        </Fields>
        <LinkButton>
          <Icon w={38} h={34}>
            <path d="M12.500 13 Q11 3 19.500 3 T26.500 13 M12.500 20 Q11 31 19.500 31 T26.500 20" stroke="#6a6a6a" strokeWidth="4.400" />
            <path d="M1 6 L8 12 M0 17 H7 M1 28 L8 22 M38 6 L31 12 M39 17 H32 M38 28 L31 22" stroke="#6a6a6a" strokeWidth="2" />
          </Icon>
        </LinkButton>
      </FormBlock>
      <SubHeading $mt={11}><Chevron w={16} sw={4} color="#5e5e5e" />Position</SubHeading>
      <FormBlock $mt={9}>
        <Fields $gap={20.5}>
          <NumberField label="X:" value="27.4675 mm" lw={114} w={200} />
          <NumberField label="Y:" value="19.4029 mm" lw={114} w={200} />
          <NumberField label="Rotation" value="0 °" lw={114} w={120} />
        </Fields>
        <AnchorWrap><Anchors /></AnchorWrap>
      </FormBlock>
    </ElementPanel>
    <BottomTabs>
      <BottomTab $w={106}>Catalog</BottomTab>
      <BottomTab $w={131}>Label Cl...</BottomTab>
      <BottomTab $w={146}>Geoproce...</BottomTab>
      <BottomTab $w={123}>Symbol...</BottomTab>
      <BottomTab $w={109} $on>Element</BottomTab>
    </BottomTabs>
  </RightCol>
);

export default function App() {
  return (
    <Shell>
      <Global />
      <Title />
      <MenuBar>
        <MenuTab $w={151}>Project</MenuTab>
        <MenuTab $w={151}>Layout</MenuTab>
        <MenuTab $w={120} $kind="active"><ActiveLabel>Insert</ActiveLabel></MenuTab>
        <MenuTab $w={168}>Analysis</MenuTab>
        <MenuTab $w={110}>View</MenuTab>
        <MenuTab $w={170}>Imagery</MenuTab>
        <MenuTab $w={120}>Share</MenuTab>
        <MenuTab $w={182} $ml={4} $kind="addin">Arc Hydro</MenuTab>
        <MenuTab $w={120}>Help</MenuTab>
        <MenuTab $w={196} $ml={39} $kind="context">Map Frame</MenuTab>
      </MenuBar>
      <Ribbon />
      <Workspace>
        <Contents />
        <Doc />
        <ElementPane />
      </Workspace>
      <Footer />
    </Shell>
  );
}
